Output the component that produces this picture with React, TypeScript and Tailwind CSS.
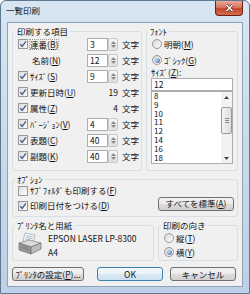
import type { ReactNode } from "react";

// accelerator letter in "(X)" is underlined, like a Win32 dialog
function Mn({ text, k, tail = "" }: { text: string; k: string; tail?: string }) {
  return (
    <span className="whitespace-nowrap">
      {text}(<span className="underline decoration-[0.5px] underline-offset-[1px]">{k}</span>){tail}
    </span>
  );
}

function CheckBox({ checked }: { checked?: boolean }) {
  return (
    <span className="flex h-[10px] w-[10px] shrink-0 items-center justify-center border border-[#999] bg-linear-to-br from-[#dcdcdc] to-[#fdfdfd]">
      {checked && (
        <svg width="8" height="8" viewBox="0 0 8 8">
          <path d="M1.2 4.2 L3.2 6.3 L6.9 1.3" fill="none" stroke="#4a5f8c" strokeWidth="1.4" />
        </svg>
      )}
    </span>
  );
}

function Radio({ checked }: { checked?: boolean }) {
  return (
    <span className="flex h-[10px] w-[10px] shrink-0 items-center justify-center rounded-full border border-[#999] bg-linear-to-br from-[#d8d8d8] to-[#fdfdfd]">
      {checked && (
        <span className="h-[5px] w-[5px] rounded-full bg-[radial-gradient(circle_at_35%_35%,#c4ddf6,#2a5d9e)]" />
      )}
    </span>
  );
}

function Spin({ value }: { value: string }) {
  return (
    <div className="flex h-[13px] w-[31px] shrink-0">
      <div className="flex flex-1 items-center border border-[#abadb3] bg-white pl-[2px]">{value}</div>
      <div className="flex w-[10px] flex-col items-center justify-center gap-[1px] rounded-[2px] border border-[#c8c8c8] bg-linear-to-b from-[#f6f6f6] to-[#e0e0e0]">
        <svg width="5" height="3" viewBox="0 0 5 3">
          <path d="M0 3 L2.5 0 L5 3 Z" fill="#8a8a8a" />
        </svg>
        <svg width="5" height="3" viewBox="0 0 5 3">
          <path d="M0 0 L2.5 3 L5 0 Z" fill="#8a8a8a" />
        </svg>
      </div>
    </div>
  );
}

function Btn({ children, className = "", primary }: { children: ReactNode; className?: string; primary?: boolean }) {
  return (
    <div
      className={
        "flex h-[14px] items-center justify-center whitespace-nowrap rounded-[3px] border " +
        (primary
          ? "border-[#3c7fb1] bg-[linear-gradient(#f4f9fc_0%,#eaf3f9_50%,#d9e9f5_50%,#cde2f2_100%)] "
          : "border-[#707070] bg-[linear-gradient(#f2f2f2_0%,#ebebeb_50%,#dddddd_50%,#cfcfcf_100%)] ") +
        className
      }
    >
      {children}
    </div>
  );
}

function PrinterIcon() {
  return (
    <svg width="26" height="24" viewBox="0 0 26 24" className="mt-[1px] shrink-0">
      <path d="M8 1 L18 3 L16 11 L6 9 Z" fill="#f6f7f9" stroke="#9aa3ad" strokeWidth="0.7" />
      <path d="M9.2 3.6 L16 5 M8.8 5.4 L15.6 6.8 M8.4 7.2 L13 8.1" stroke="#7d93b8" strokeWidth="0.6" />
      <path d="M2 11 L12 8 L24 11 L14 15 Z" fill="#dcdcdc" stroke="#707070" strokeWidth="0.6" />
      <path d="M2 11 L14 15 L14 22 L2 18 Z" fill="#9a9a9a" stroke="#5e5e5e" strokeWidth="0.6" />
      <path d="M14 15 L24 11 L24 17 L14 22 Z" fill="#bdbdbd" stroke="#5e5e5e" strokeWidth="0.6" />
      <path d="M4 14 L12 16.6 M4 15.6 L12 18.2" stroke="#6a6a6a" strokeWidth="0.6" />
    </svg>
  );
}

type Item = { check: boolean | null; label: ReactNode; spin?: string; fixed?: string };

const ITEMS: Item[] = [
  { check: true, label: <Mn text="連番" k="B" />, spin: "3" },
  { check: null, label: <Mn text="名前" k="N" />, spin: "12" },
  { check: true, label: <Mn text="ｻｲｽﾞ" k="S" />, spin: "9" },
  { check: true, label: <Mn text="更新日時" k="U" />, fixed: "19" },
  { check: true, label: <Mn text="属性" k="Z" />, fixed: "4" },
  { check: true, label: <Mn text="ﾊﾞｰｼﾞｮﾝ" k="V" />, spin: "4" },
  { check: true, label: <Mn text="表題" k="C" />, spin: "40" },
  { check: true, label: <Mn text="副題" k="K" />, spin: "40" },
];

const SIZES = ["8", "9", "10", "11", "12", "14", "16", "18"];

const GROUP = "rounded-[3px] border border-[#d5dfe5]";

export default function App() {
  return (
    <div className="h-[294px] w-[250px] overflow-hidden bg-white font-['Noto_Sans_CJK_JP',sans-serif] text-[8.5px] leading-[9px] text-[#111]">
      <div className="flex h-full flex-col rounded-t-[6px] border border-[#5f7892] bg-linear-to-b from-[#d8e5f2] to-[#bed0e5]">
        {/* title bar */}
        <div className="flex h-[21px] shrink-0 items-start justify-between pl-[5px]">
          <span className="mt-[5px] text-[#101820]">一覧印刷</span>
          <div className="mr-[6px] flex h-[15px] w-[28px] items-center justify-center rounded-b-[4px] border border-t-0 border-[#6f2014] bg-[linear-gradient(#e9a898_0%,#d97660_45%,#c2462c_55%,#d26c50_100%)]">
            <svg width="9" height="8" viewBox="0 0 9 8">
              <path d="M1.5 1 L7.5 7 M7.5 1 L1.5 7" stroke="#5a1a10" strokeWidth="2.6" />
              <path d="M1.5 1 L7.5 7 M7.5 1 L1.5 7" stroke="#ffffff" strokeWidth="1.5" />
            </svg>
          </div>
        </div>

        {/* client area */}
        <div className="mx-[6px] mb-[6px] flex flex-1 flex-col border border-[#8ea3b9] bg-[#f0f0f0] px-[4px] pt-[4px]">
          <div className="flex gap-[4px]">
            <fieldset className={GROUP + " w-[130px] shrink-0 pb-[6px] pl-[5px]"}>
              <legend className="-ml-[3px] px-[2px] leading-[9px]">印刷する項目</legend>
              {ITEMS.map((it, i) => (
                <div key={i} className="flex h-[16px] items-center whitespace-nowrap">
                  <div className="flex w-[69px] shrink-0 items-center gap-[2px]">
                    {it.check === null ? <span className="w-[12px]" /> : <CheckBox checked={it.check} />}
                    <span className={i === 0 ? "outline-1 outline-dotted outline-[#9a9a9a]" : ""}>{it.label}</span>
                  </div>
                  {it.spin ? (
                    <Spin value={it.spin} />
                  ) : (
                    <div className="w-[31px] shrink-0 text-right">{it.fixed}</div>
                  )}
                  <span className="ml-[4px] whitespace-nowrap">文字</span>
                </div>
              ))}
            </fieldset>

            <fieldset className={GROUP + " flex min-w-0 flex-1 flex-col px-[4px] pb-[6px]"}>
              <legend className="-ml-[3px] px-[2px] leading-[9px]">ﾌｫﾝﾄ</legend>
              <div className="flex h-[16px] items-center gap-[2px] pl-[1px]">
                <Radio />
                <Mn text="明朝" k="M" />
              </div>
              <div className="flex h-[16px] items-center gap-[2px] pl-[1px]">
                <Radio checked />
                <Mn text="ｺﾞｼｯｸ" k="G" />
              </div>
              <div className="leading-[9px]">
                <Mn text="ｻｲｽﾞ" k="Z" tail=":" />
              </div>
              <div className="mt-[1px] flex h-[13px] items-center border border-[#abadb3] bg-white pl-[2px]">12</div>
              <div className="flex h-[73px] border border-[#abadb3] bg-white">
                <div className="flex flex-1 flex-col pl-[2px] text-[8px] leading-[8.8px]">
                  {SIZES.map((s) => (
                    <span key={s} className="h-[8.8px]">
                      {s}
                    </span>
                  ))}
                </div>
                <div className="flex w-[11px] flex-col bg-[#f2f2f2]">
                  <div className="flex h-[10px] items-center justify-center">
                    <svg width="5" height="3" viewBox="0 0 5 3">
                      <path d="M0 3 L2.5 0 L5 3 Z" fill="#444" />
                    </svg>
                  </div>
                  <div className="mt-[5px] flex h-[27px] flex-col items-center justify-center gap-[1px] rounded-[2px] border border-[#9a9a9a] bg-linear-to-r from-[#f4f4f4] to-[#dcdcdc]">
                    <span className="h-px w-[4px] bg-[#8a8a8a]" />
                    <span className="h-px w-[4px] bg-[#8a8a8a]" />
                    <span className="h-px w-[4px] bg-[#8a8a8a]" />
                  </div>
                  <div className="mt-auto flex h-[10px] items-center justify-center">
                    <svg width="5" height="3" viewBox="0 0 5 3">
                      <path d="M0 0 L2.5 3 L5 0 Z" fill="#444" />
                    </svg>
                  </div>
                </div>
              </div>
            </fieldset>
          </div>

          <fieldset className={GROUP + " mt-[4px] pb-[3px] pl-[5px] pr-[3px]"}>
            <legend className="-ml-[3px] px-[2px] leading-[8px]">ｵﾌﾟｼｮﾝ</legend>
            <div className="flex h-[15px] items-center gap-[2px]">
              <CheckBox />
              <Mn text="ｻﾌﾞﾌｫﾙﾀﾞも印刷する" k="F" />
            </div>
            <div className="flex h-[15px] items-center">
              <div className="flex items-center gap-[2px]">
                <CheckBox checked />
                <Mn text="印刷日付をつける" k="D" />
              </div>
              <Btn className="-mt-[4px] ml-auto h-[13px] w-[76px]">
                <Mn text="すべてを標準" k="A" />
              </Btn>
            </div>
          </fieldset>

          <div className="mt-[4px] flex gap-[4px]">
            <fieldset className={GROUP + " w-[142px] shrink-0 pb-[1px] pl-[4px]"}>
              <legend className="-ml-[2px] px-[2px] leading-[8px]">ﾌﾟﾘﾝﾀ名と用紙</legend>
              <div className="flex pt-[2px]">
                <PrinterIcon />
                <div className="ml-[5px] flex flex-col">
                  <div className="flex h-[14px] items-center whitespace-nowrap">EPSON LASER LP-8300</div>
                  <div className="flex h-[14px] items-center">A4</div>
                </div>
              </div>
            </fieldset>
            <fieldset className={GROUP + " min-w-0 flex-1 pb-[1px] pl-[5px]"}>
              <legend className="-ml-[3px] px-[2px] leading-[8px]">印刷の向き</legend>
              <div className="pt-[2px]">
                <div className="flex h-[14px] items-center gap-[2px]">
                  <Radio />
                  <Mn text="縦" k="T" />
                </div>
                <div className="flex h-[14px] items-center gap-[2px]">
                  <Radio checked />
                  <Mn text="横" k="Y" />
                </div>
              </div>
            </fieldset>
          </div>

          <div className="mt-[6px] flex">
            <Btn className="w-[72px]">
              <Mn text="ﾌﾟﾘﾝﾀの設定" k="P" tail="..." />
            </Btn>
            <Btn primary className="ml-[13px] w-[66px]">
              OK
            </Btn>
            <Btn className="ml-[7px] w-[66px]">キャンセル</Btn>
          </div>
        </div>
      </div>
    </div>
  );
}
